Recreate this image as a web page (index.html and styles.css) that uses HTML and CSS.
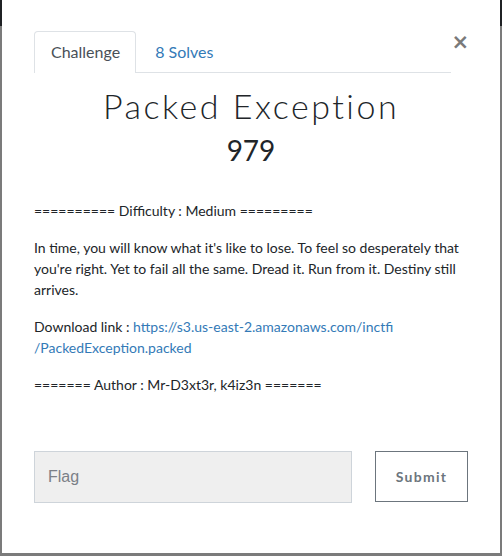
FILE: index.html
```html
<!DOCTYPE html>
<html>
<head>
<meta charset="utf-8">
<link rel="stylesheet" href="styles.css">
</head>
<body>
<div class="modal">
  <div class="head">
    <ul class="tabs">
      <li class="tab active">Challenge</li>
      <li class="tab">8 Solves</li>
    </ul>
    <span class="close">&times;</span>
  </div>
  <h1 class="title">Packed Exception</h1>
  <h2 class="value">979</h2>
  <div class="desc">
    <p>========== Difficulty : Medium =========</p>
    <p>In time, you will know what it's like to lose. To feel so desperately that you're right. Yet to fail all the same. Dread it. Run from it. Destiny still arrives.</p>
    <p>Download link : <a href="#">https://s3.us-east-2.amazonaws.com/inctfi<br>/PackedException.packed</a></p>
    <p>======= Author : Mr-D3xt3r, k4iz3n =======</p>
  </div>
  <form class="submit-row">
    <input class="flag" type="text" placeholder="Flag">
    <button class="btn" type="button">Submit</button>
  </form>
</div>
</body>
</html>
```
FILE: styles.css
```css
html, body {
  margin: 0;
  padding: 0;
}
body {
  width: 502px;
  height: 556px;
  background: linear-gradient(to bottom, #1f2124 0, #1f2124 26px, #7b7b7b 26px, #7b7b7b 100%);
  font-family: Lato, "Noto Sans", sans-serif;
  color: #212529;
  overflow: hidden;
}
.modal {
  margin: 0 2px;
  height: 553px;
  background: #fff;
  padding: 31px 32px 0 32px;
  box-sizing: border-box;
}
.head {
  display: flex;
  align-items: flex-start;
}
.tabs {
  list-style: none;
  margin: 0;
  padding: 0;
  display: flex;
  width: 420px;
  border-bottom: 1px solid #dee2e6;
}
.tab {
  height: 40px;
  line-height: 40px;
  padding: 0 17px 0 18px;
  font-size: 16px;
  color: #337ab7;
  border: 1px solid transparent;
  border-bottom: none;
  border-radius: 4px 4px 0 0;
  margin-bottom: -1px;
}
.tab.active {
  color: #495057;
  border-color: #dee2e6;
  background: #fff;
  padding: 0 15px 0 16px;
  height: 41px;
}
.close {
  margin-left: auto;
  margin-right: -1px;
  margin-top: 1px;
  font-family: "DejaVu Sans", sans-serif;
  font-size: 21px;
  font-weight: bold;
  color: #7a7a7a;
  line-height: 20px;
}
.title {
  margin: 13px 0 0;
  text-align: center;
  font-weight: 300;
  font-size: 34px;
  letter-spacing: 2.5px;
  line-height: 40px;
  color: #212529;
}
.value {
  margin: 7px 0 0;
  text-align: center;
  font-weight: 400;
  font-size: 28px;
  line-height: 34px;
  color: #212529;
}
.desc {
  margin-top: 33px;
  font-size: 14px;
  line-height: 21px;
}
.desc p {
  margin: 0 0 16px;
}
.desc a {
  color: #337ab7;
  text-decoration: none;
}
.submit-row {
  display: flex;
  justify-content: space-between;
  align-items: flex-start;
  margin-top: 56px;
}
.flag {
  width: 318px;
  height: 52px;
  box-sizing: border-box;
  border: 1px solid #ced4da;
  background: #efefef;
  padding: 0 13px;
  font-family: "Liberation Sans", Arial, sans-serif;
  font-size: 16px;
  color: #495057;
  border-radius: 0;
}
.flag::placeholder {
  color: #7b8087;
}
.btn {
  width: 93px;
  height: 51px;
  box-sizing: border-box;
  background: #fff;
  border: 1px solid #6c757d;
  border-radius: 0;
  font-family: Lato, sans-serif;
  font-weight: 700;
  font-size: 14px;
  letter-spacing: 1.3px;
  color: #6c757d;
}
```
